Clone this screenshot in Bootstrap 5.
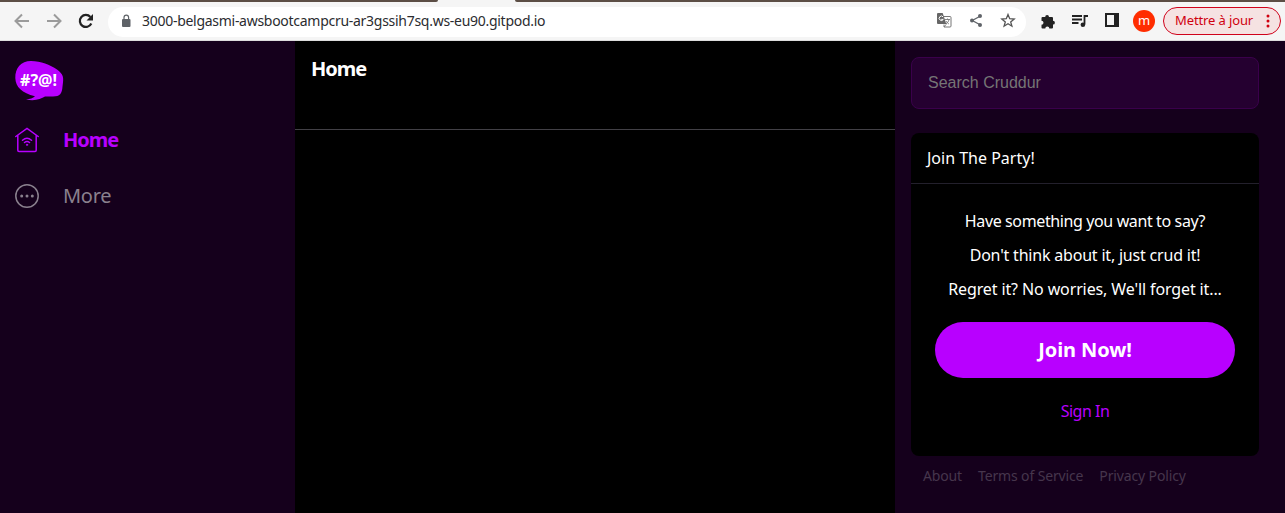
<!DOCTYPE html>
<html lang="fr">
<head>
<meta charset="utf-8">
<title>Cruddur</title>
<link href="https://cdn.jsdelivr.net/npm/bootstrap@5.3.0/dist/css/bootstrap.min.css" rel="stylesheet">
<style>
body{font-family:"Noto Sans","Open Sans",sans-serif;background:#15001c;color:#fff;height:513px;overflow:hidden;line-height:18px}
svg{display:block;flex:none}
.tabstrip{height:2px;background:#f5f5f5}
.tab-edge{background:#5c4e45}
.tab-edge.before{width:438px;border-bottom-right-radius:3px}
.tab-edge.after{width:770px;border-bottom-left-radius:3px}
.toolbar{height:39px;background:#f5f5f5;border-bottom:1px solid #ddd;padding:4px 4px 3px 12px}
.address{height:30px;width:918px;margin-left:12px;background:#fff;border-radius:15px;color:#2b2c2f;font-size:14px;padding:0 10px 0 11px}
.address .url{margin-left:9px;padding-bottom:2px;letter-spacing:-.28px;white-space:nowrap}
.avatar{width:22px;height:22px;background:#ff2d00;font-size:13px;line-height:20px}
.update{width:118px;height:28px;border:1px solid #d0021b;border-radius:14px;background:#f5e2e2;color:#d0000f;font-size:13px;padding:0 7px 2px 11px;white-space:nowrap}
.update span{letter-spacing:-.12px}
.nav-arrow{margin-left:12px}
.app{height:472px}
.left-col{width:295px;padding:19px 15px}
.center-col{width:600px;background:#000}
.center-col header{height:89px;border-bottom:1px solid #424046;padding:19px 16px}
.right-col{width:390px;padding:16px 26px 0 16px}
.title{font-size:20px;font-weight:700;letter-spacing:-1px}
.side-link{height:24px;font-size:20px;gap:24px;color:#8a808e;text-decoration:none}
.side-link.active{color:#b800ff;font-weight:700}
.more{letter-spacing:-.3px}
.search{height:52px;border:1px solid #3a004b!important;border-radius:8px;background:#250030!important;font:16px "Liberation Sans",sans-serif;padding:0 16px}
.search::placeholder{color:#757575}
.join{height:323px;margin-top:24px;background:#000;border-radius:8px;font-size:16px}
.join header{height:51px;padding:16px;border-bottom:1px solid #23202c}
.join p{margin:0 0 16px;white-space:nowrap}
.join-body{padding:28px 24px 0}
.join-btn{height:56px;margin-top:24px;background:#b800ff;border-radius:28px;font-size:20px;font-weight:700;letter-spacing:-.1px;color:#fff;text-decoration:none}
.sign{display:block;margin-top:24px;color:#b800ff;text-decoration:none;letter-spacing:-.5px}
.foot{font-size:14px;padding:11px 12px;gap:16px;white-space:nowrap;letter-spacing:-.14px}
.foot a{color:#46364c;text-decoration:none}
.line-1{letter-spacing:-.38px}.line-2{letter-spacing:-.2px}.line-3{letter-spacing:-.12px}
</style>
</head>
<body>
<div class="tabstrip d-flex justify-content-between"><div class="tab-edge before"></div><div class="tab-edge after"></div></div>
<div class="toolbar d-flex align-items-center">
  <svg width="20" height="20" viewBox="0 0 20 20" fill="none" stroke="#9b9b9b" stroke-width="2"><path d="M17 9H4M10 2.500 3.500 9l6.500 6.500"/></svg>
  <svg class="nav-arrow" width="20" height="20" viewBox="0 0 20 20" fill="none" stroke="#9b9b9b" stroke-width="2"><path d="M3 9h13M10 2.500 16.500 9 10 15.500"/></svg>
  <svg class="nav-arrow" width="20" height="20" viewBox="0 0 20 20"><path d="M15.300 11.500A6 6 0 1 1 14.400 5" fill="none" stroke="#222" stroke-width="2.200"/><path d="M17 2v6.500h-6.500z" fill="#222"/></svg>
  <div class="address d-flex align-items-center">
    <svg width="14" height="16" viewBox="0 0 14 16"><rect x="3" y="5" width="8.500" height="8" rx="1" fill="#5f6368"/><path d="M5 5.500V3.500a2.300 2.300 0 0 1 4.600 0v2" fill="none" stroke="#5f6368" stroke-width="1.200"/></svg>
    <span class="url">3000-belgasmi-awsbootcampcru-ar3gssih7sq.ws-eu90.gitpod.io</span>
    <div class="d-flex gap-3 ms-auto pb-1">
      <svg width="16" height="16" viewBox="0 0 16 16"><path d="M6.500 4.500H14a1 1 0 0 1 1 1V14a1 1 0 0 1-1 1H8" fill="none" stroke="#777"/><path d="M2 1h4.700l3.600 11H2a1 1 0 0 1-1-1V2a1 1 0 0 1 1-1z" fill="#666"/><path d="M7.200 5A2.200 2.200 0 1 0 7.300 7.400H5.200" fill="none" stroke="#fff"/><path d="M9 7.500h5M11.500 6.500v1M13 7.500c-.4 2-1.600 3.500-3 4.500m0-3c.8 1.500 2 2.500 3 3M8 12.500v2.500l2.200-2.700" fill="none" stroke="#777" stroke-width=".9"/></svg>
      <svg width="16" height="16" viewBox="0 0 16 16" fill="#5f6368"><path d="M12.500 4 4.300 8.500l8.200 4.500" fill="none" stroke="#5f6368" stroke-width="1.300"/><circle cx="12" cy="4" r="2"/><circle cx="4" cy="8.500" r="2"/><circle cx="12" cy="13" r="2"/></svg>
      <svg width="16" height="16" viewBox="0 0 16 16"><path d="m8 2.500 1.700 4.200 4.500.3-3.500 2.900 1.200 4.300L8 11.800l-3.900 2.400 1.200-4.300L1.800 7l4.500-.3z" fill="none" stroke="#555" stroke-width="1.300"/></svg>
    </div>
  </div>
  <svg style="margin-left:14px" width="16" height="16" viewBox="0 0 16 16"><path d="M2.500 3H5.200a1.900 1.900 0 1 1 3.800 0H12a1 1 0 0 1 1 1v2.800a1.900 1.900 0 1 1 0 3.800V13.500a1 1 0 0 1-1 1H9.300a2 2 0 0 0-4 0H2.500a1 1 0 0 1-1-1v-2.700a2 2 0 0 0 0-4V4a1 1 0 0 1 1-1z" fill="#222"/></svg>
  <svg style="margin-left:16px" width="16" height="16" viewBox="0 0 16 16"><path d="M0 2h10M0 5.500h10M0 9h6.500" stroke="#222" stroke-width="1.800"/><path d="M12.500 10.500V2H16" fill="none" stroke="#222" stroke-width="1.800"/><circle cx="10.900" cy="10.800" r="2.300" fill="#222"/></svg>
  <svg class="mb-1" style="margin-left:17px" width="14" height="14" viewBox="0 0 14 14"><path d="M0 0h14v14H0zM2 2v10h7V2z" fill="#222" fill-rule="evenodd"/></svg>
  <div class="avatar rounded-circle text-center" style="margin:0 0 2px 14px">m</div>
  <div class="update d-flex align-items-center justify-content-between" style="margin:0 0 1px 8px"><span>Mettre à jour</span><svg width="10" height="16" viewBox="0 0 10 16" fill="#d0000f"><circle cx="5" cy="4" r="1.500"/><circle cx="5" cy="9" r="1.500"/><circle cx="5" cy="14" r="1.500"/></svg></div>
</div>
<main class="app d-flex">
  <nav class="left-col">
    <svg width="49" height="42" viewBox="0 0 49 42"><path d="M16 1C6 1 0 8 .3 18 .6 27 7 33 20 36.300c-2 2-5 2.800-9 3 8 2.200 15-.3 19-2.700h8c7 0 9-3 9.500-10C49 17 48.500 14.500 42 9.500 35 5 26 1 16 1z" fill="#b800ff"/><text x="5" y="26" textLength="37" lengthAdjust="spacingAndGlyphs" font-family="Noto Sans,sans-serif" font-weight="700" font-size="16" fill="#fff">#?@!</text></svg>
    <a href="#" class="side-link active d-flex align-items-center" style="margin-top:26px">
      <svg width="24" height="26" viewBox="0 0 24 26" fill="none" stroke="#b800ff" stroke-width="1.500" stroke-linecap="round"><path d="M.8 9.500 12 1.500l11.200 8M2.800 8.500v14.800q0 1.200 1.200 1.200h16q1.200 0 1.200-1.200V8.500M7.500 13.200q4.500-3.800 9 0M9.500 15.500q2.500-2 5 0"/><circle cx="12" cy="17.800" r=".7" fill="#b800ff" stroke-width=".8"/></svg><span class="title">Home</span></a>
    <a href="#" class="side-link d-flex align-items-center" style="margin-top:32px">
      <svg width="24" height="24" viewBox="0 0 24 24" fill="#8a808e"><circle cx="12" cy="12" r="11.200" fill="none" stroke="#8a808e" stroke-width="1.500"/><circle cx="6.700" cy="12" r="1.500"/><circle cx="12" cy="12" r="1.500"/><circle cx="17.300" cy="12" r="1.500"/></svg><span class="more">More</span></a>
  </nav>
  <section class="center-col"><header><div class="title">Home</div></header></section>
  <aside class="right-col">
    <input class="search form-control" type="text" placeholder="Search Cruddur">
    <section class="join">
      <header>Join The Party!</header>
      <div class="join-body text-center">
        <p class="line-1">Have something you want to say?</p><p class="line-2">Don't think about it, just crud it!</p><p class="line-3 mb-0">Regret it? No worries, We'll forget it...</p>
        <a href="#" class="join-btn d-flex align-items-center justify-content-center">Join Now!</a>
        <a href="#" class="sign">Sign In</a>
      </div>
    </section>
    <footer class="foot d-flex"><a href="#">About</a><a href="#">Terms of Service</a><a href="#">Privacy Policy</a></footer>
  </aside>
</main>
<script src="https://cdn.jsdelivr.net/npm/bootstrap@5.3.0/dist/js/bootstrap.bundle.min.js"></script>
</body>
</html>
